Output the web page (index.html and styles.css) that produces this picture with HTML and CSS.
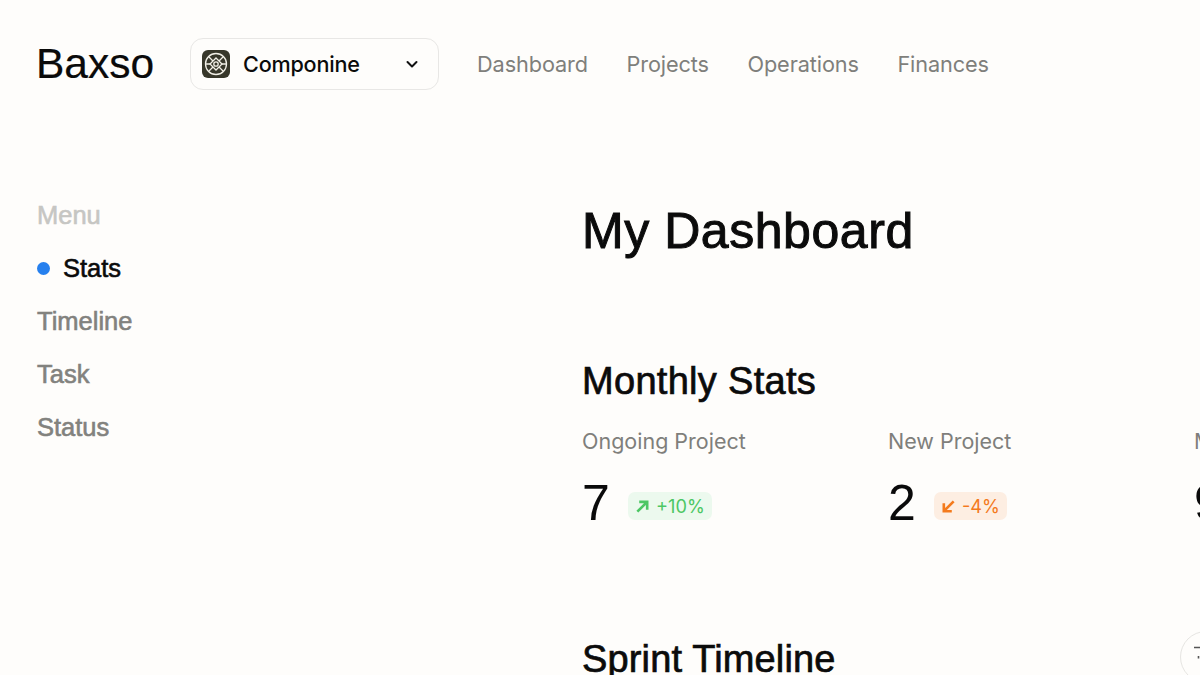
FILE: index.html
```html
<!DOCTYPE html>
<html lang="en">
<head>
<meta charset="utf-8">
<title>Baxso</title>
<link rel="stylesheet" href="styles.css">
</head>
<body>
<div class="page">
  <header class="topbar">
    <div class="brand">Baxso</div>
    <button class="switcher">
      <span class="switcher-icon">
        <svg width="28" height="28" viewBox="0 0 28 28" fill="none" stroke="#f1efe6" stroke-width="1.3">
          <circle cx="14" cy="14" r="10.5"/>
          <path d="M14 8 20 14 14 20 8 14Z"/>
          <path d="M6.5 6.5 11 11M21.500 6.5 17 11M6.500 21.500 11 17M21.500 21.500 17 17"/>
          <path d="M3.500 14H8M20 14H24.500"/>
          <circle cx="14" cy="14" r="2.2"/>
        </svg>
      </span>
      <span class="switcher-name">Componine</span>
      <svg class="chevron" width="14" height="14" viewBox="0 0 14 14" fill="none" stroke="#111" stroke-width="2" stroke-linecap="round" stroke-linejoin="round"><path d="M2.5 5 7 9.5 11.5 5"/></svg>
    </button>
    <nav class="nav">
      <a>Dashboard</a>
      <a>Projects</a>
      <a>Operations</a>
      <a>Finances</a>
    </nav>
  </header>
  <div class="body-row">
    <aside class="sidebar">
      <div class="side-title">Menu</div>
      <div class="side-item active"><span class="dot"></span>Stats</div>
      <div class="side-item">Timeline</div>
      <div class="side-item">Task</div>
      <div class="side-item">Status</div>
    </aside>
    <main class="main">
      <h1 class="title">My Dashboard</h1>
      <h2 class="section first">Monthly Stats</h2>
      <div class="stats">
        <div class="stat">
          <div class="stat-label">Ongoing Project</div>
          <div class="stat-row">
            <span class="stat-value">7</span>
            <span class="badge up">
              <svg width="15" height="15" viewBox="0 0 16 16" fill="none" stroke="currentColor" stroke-width="2.8"><path d="M2.5 13.500 13 3M4.500 3H13V11.500"/></svg>
              +10%
            </span>
          </div>
        </div>
        <div class="stat">
          <div class="stat-label">New Project</div>
          <div class="stat-row">
            <span class="stat-value">2</span>
            <span class="badge down">
              <svg width="15" height="15" viewBox="0 0 16 16" fill="none" stroke="currentColor" stroke-width="2.8"><path d="M13.500 2.500 3 13M3 4.500V13H11.500"/></svg>
              -4%
            </span>
          </div>
        </div>
        <div class="stat">
          <div class="stat-label">Members</div>
          <div class="stat-row">
            <span class="stat-value">9</span>
          </div>
        </div>
      </div>
      <h2 class="section second">Sprint Timeline</h2>
    </main>
  </div>
  <button class="fab">
    <svg width="24" height="24" viewBox="0 0 24 24" fill="none" stroke="#555" stroke-width="1.6"><path d="M0 2.500H20M4.500 11V13.500"/></svg>
  </button>
</div>
</body>
</html>
```
FILE: styles.css
```css
* { box-sizing: border-box; }
html, body { margin: 0; padding: 0; height: 100%; overflow: hidden; background: #fefdfb; }
.page { position: relative; width: 1200px; height: 675px; overflow: hidden; background: #fefdfb; color: #0b0b0b; font-family: "Liberation Sans", Arial, sans-serif; }
.topbar { display: flex; align-items: center; height: 52px; margin-top: 38px; padding-left: 36px; position: absolute; top: 0; left: 0; }
.brand { width: 154px; font-size: 42.5px; line-height: 52px; color: #0a0a0a; -webkit-text-stroke: 0.2px currentColor; }
.switcher { display: flex; align-items: center; width: 249px; height: 52px; padding: 0 19px 0 11px; background: #fefdfb; border: 1.5px solid #e8e7e5; border-radius: 13px; font: inherit; color: inherit; }
.switcher-icon { width: 28px; height: 28px; border-radius: 6px; background: #37372a; display: flex; flex: none; }
.switcher-name { margin-left: 13px; flex: 1; text-align: left; font-family: Inter, sans-serif; font-size: 21.6px; font-weight: 500; letter-spacing: -0.2px; }
.nav { display: flex; gap: 38.5px; margin-left: 38px; font-family: Inter, sans-serif; font-size: 21.7px; color: #7f7f7b; letter-spacing: -0.1px; }
.body-row { display: flex; padding-top: 194px; padding-left: 37px; }
.sidebar { width: 545px; flex: none; font-size: 25.5px; font-weight: 400; line-height: 53px; color: #82827e; -webkit-text-stroke: 0.6px currentColor; }
.side-title { color: #c6c6c3; height: 42px; line-height: 42px; margin-bottom: 6px; }
.side-item { height: 53px; }
.side-item.active { display: flex; align-items: center; color: #0b0b0b; }
.dot { width: 13px; height: 13px; border-radius: 50%; background: #2680ee; margin-right: 13px; }
.main { flex: none; width: 700px; }
.title { margin: 7px 0 0; font-size: 50px; font-weight: 400; -webkit-text-stroke: 1px currentColor; line-height: 60px; letter-spacing: 0.55px; }
.section { margin: 0; font-size: 38px; font-weight: 400; line-height: 44px; -webkit-text-stroke: 0.7px currentColor; letter-spacing: 0.15px; }
.section.first { margin-top: 98px; letter-spacing: 0.3px; }
.section.second { margin-top: 108px; }
.stats { display: flex; margin-top: 25px; }
.stat { width: 306px; flex: none; }
.stat-label { font-family: Inter, sans-serif; font-size: 21.5px; line-height: 26px; color: #7f7f7b; }
.stat-row { display: flex; align-items: center; margin-top: 29px; height: 46px; }
.stat-value { font-size: 50px; line-height: 46px; width: 46px; color: #0a0a0a; margin-bottom: 6px; }
.badge { display: flex; align-items: center; gap: 6px; height: 28px; padding: 0 7px; border-radius: 7px; font-family: Inter, sans-serif; font-size: 18.2px; }
.badge.up { color: #4cc764; background: #ecf9ee; }
.badge.down { color: #f47a1c; background: #fdeee2; }
.fab { position: absolute; left: 1180px; top: 631px; width: 52px; height: 52px; border-radius: 50%; border: 1.5px solid #e6e5e2; background: #fefdfb; padding: 0; display: flex; align-items: center; justify-content: center; }
```
